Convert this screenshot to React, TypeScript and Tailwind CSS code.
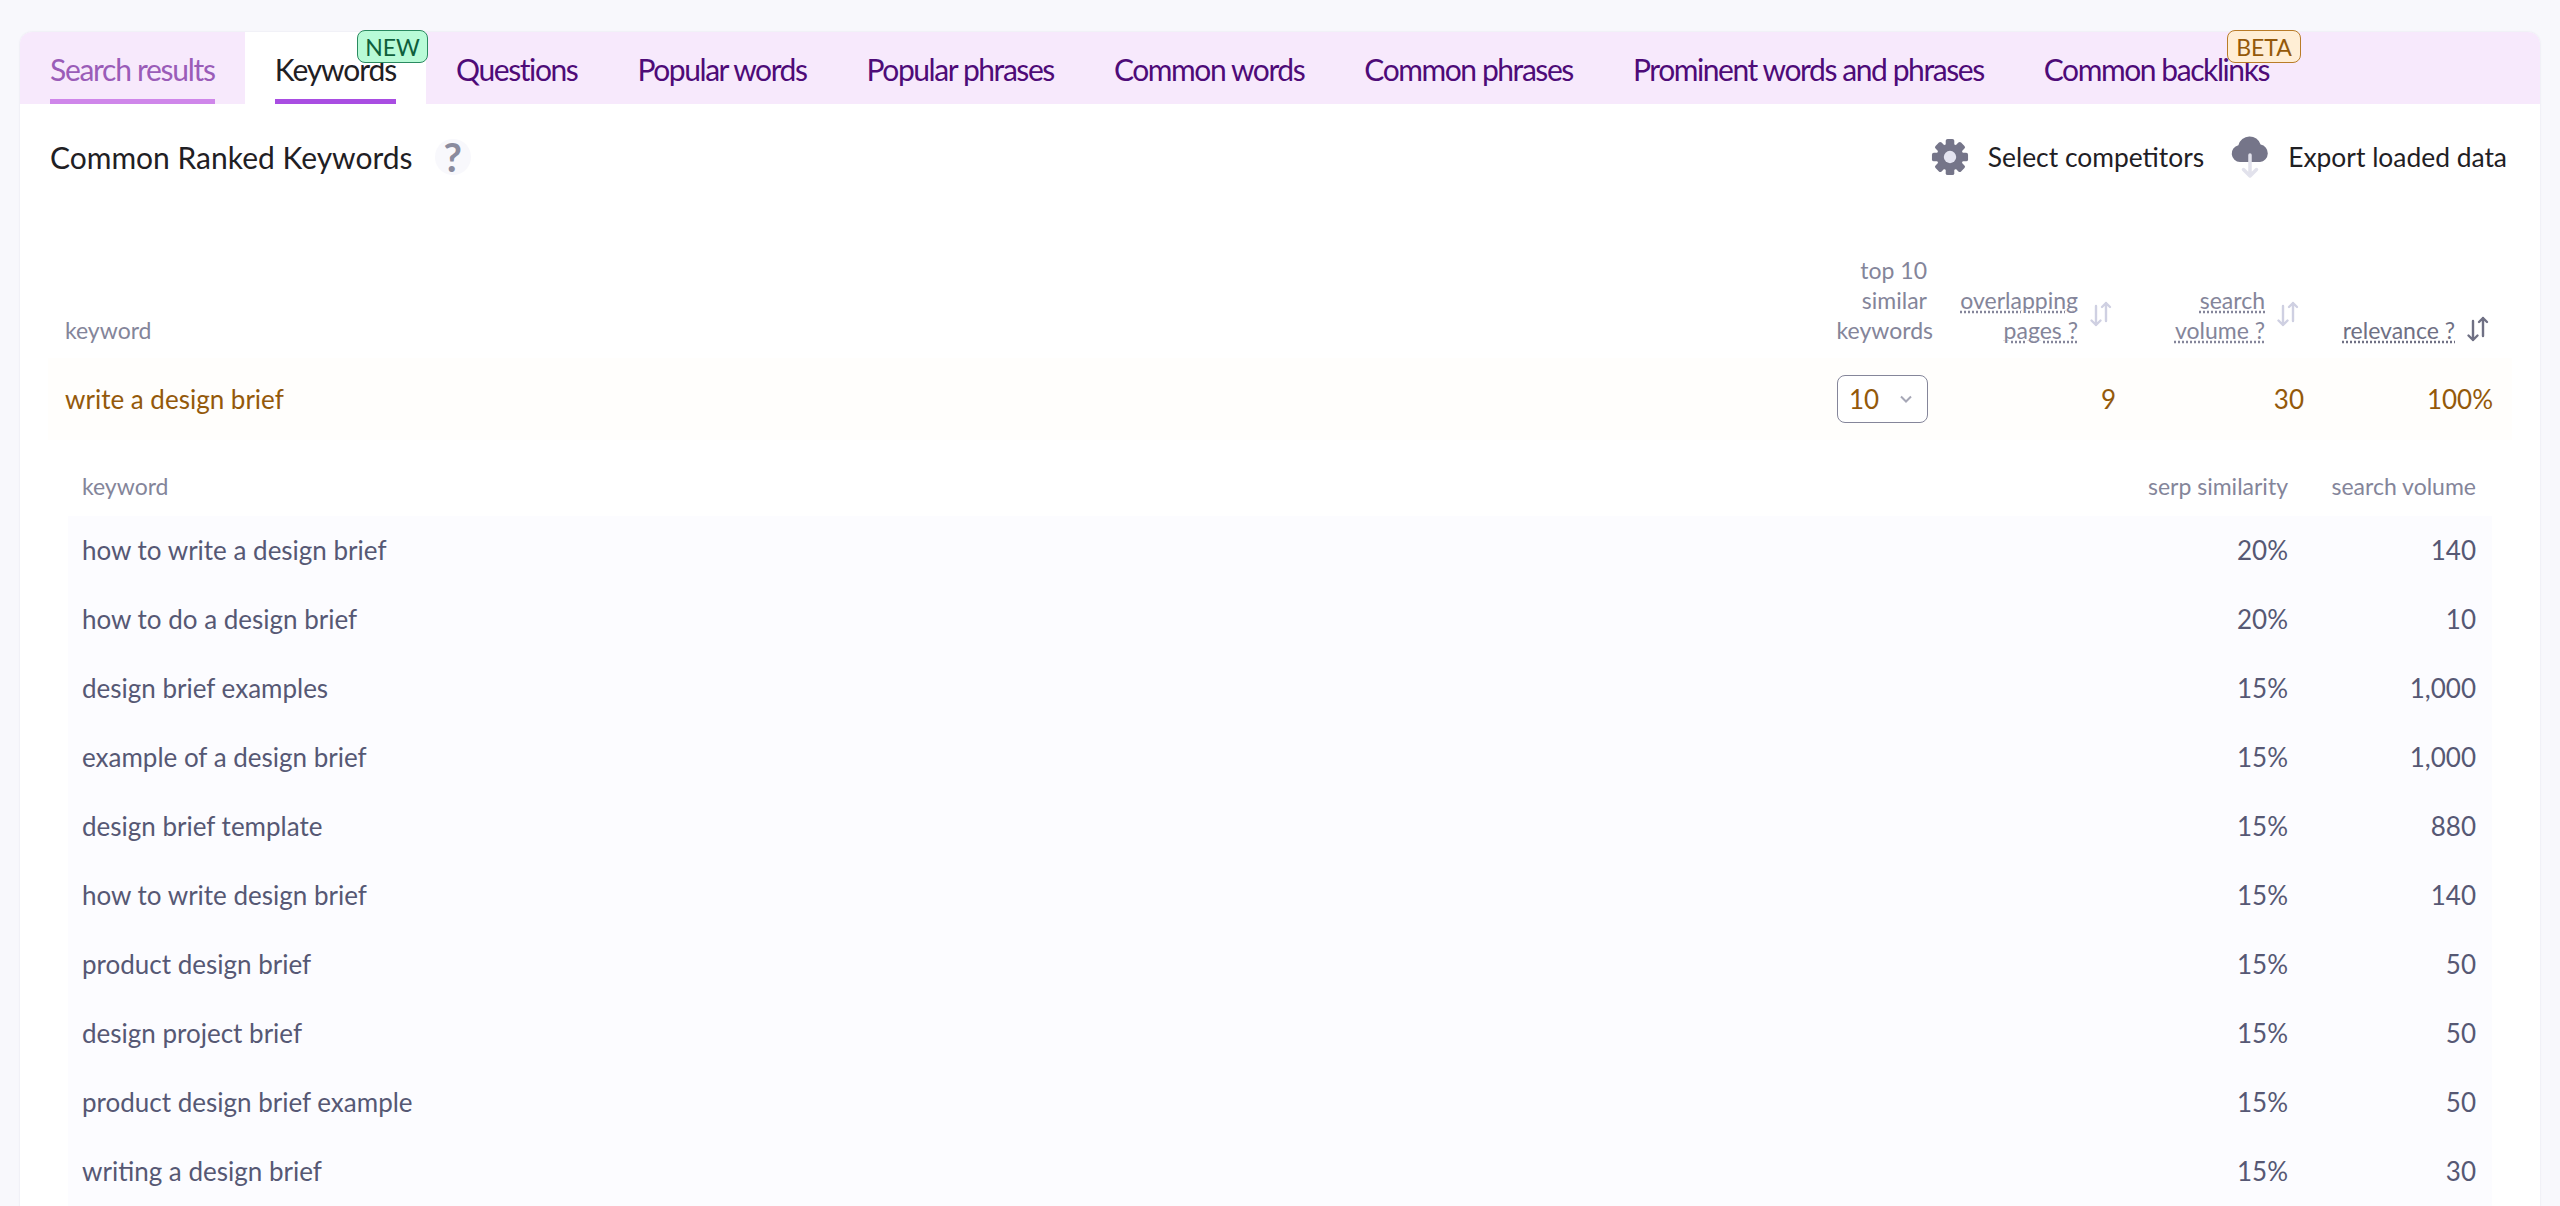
const TABS = [
  { label: "Search results", state: "visited" },
  { label: "Keywords", state: "active", badge: "new" },
  { label: "Questions" },
  { label: "Popular words" },
  { label: "Popular phrases" },
  { label: "Common words" },
  { label: "Common phrases" },
  { label: "Prominent words and phrases" },
  { label: "Common backlinks", badge: "beta" },
];

const ROWS = [
  ["how to write a design brief", "20%", "140"],
  ["how to do a design brief", "20%", "10"],
  ["design brief examples", "15%", "1,000"],
  ["example of a design brief", "15%", "1,000"],
  ["design brief template", "15%", "880"],
  ["how to write design brief", "15%", "140"],
  ["product design brief", "15%", "50"],
  ["design project brief", "15%", "50"],
  ["product design brief example", "15%", "50"],
  ["writing a design brief", "15%", "30"],
];

function GearIcon() {
  const teeth = [0, 45, 90, 135, 180, 225, 270, 315];
  return (
    <svg viewBox="0 0 40 40" className="size-[38px]">
      {teeth.map((deg) => (
        <rect key={deg} x="15.5" y="1" width="9" height="9" rx="2" fill="#757589" transform={`rotate(${deg} 20 20)`} />
      ))}
      <circle cx="20" cy="20" r="14" fill="#757589" />
      <circle cx="20" cy="20" r="6.5" fill="#e4e4f0" />
    </svg>
  );
}

function CloudIcon() {
  return (
    <svg viewBox="0 0 40 44" className="h-[44px] w-[40px]">
      <path
        d="M10 27a8.5 8.5 0 0 1-1.6-16.8A11.5 11.5 0 0 1 30.6 9.6 8.8 8.8 0 0 1 30 27Z"
        fill="#757589"
      />
      <path d="M20 20v21M13.5 34.5 20 41l6.5-6.5" fill="none" stroke="#e2e2ec" strokeWidth="3.5" strokeLinecap="round" strokeLinejoin="round" />
    </svg>
  );
}

function SortIcon({ active }: { active?: boolean }) {
  const color = active ? "#6f7084" : "#cfd0e2";
  return (
    <svg viewBox="0 0 24 26" className="h-[26px] w-[24px]" fill="none" stroke={color} strokeWidth="2.4" strokeLinecap="round" strokeLinejoin="round">
      <path d="M7 5v19M2.5 19.5 7 24l4.5-4.5" />
      <path d="M17 20V2M13 6l4-4 4 4" />
    </svg>
  );
}

function HeaderLabel({ lines, active }: { lines: string[]; active?: boolean }) {
  return (
    <div className="flex items-start justify-end gap-[11px]">
      <div className={`text-right underline decoration-dotted underline-offset-2 ${active ? "text-[#6f7084]" : "text-[#84859a]"}`}>
        {lines.map((line) => (
          <div key={line}>{line}</div>
        ))}
      </div>
      <div className={active ? "mt-[1px]" : "mt-[16px]"}>
        <SortIcon active={active} />
      </div>
    </div>
  );
}

export default function App() {
  return (
    <div className="h-screen overflow-hidden bg-[#f8f8fc] px-5 pt-8 font-['Lato','Liberation_Sans',sans-serif]">
      <div className="h-[1300px] rounded-t-xl bg-white shadow-[0_0_2px_rgba(120,120,160,0.18)]">
        <nav className="flex h-[72px] rounded-t-xl bg-[#f7e9fc]">
          {TABS.map((tab) => (
            <div
              key={tab.label}
              className={`flex h-full flex-col px-[30px] pt-[21px] ${tab.state === "active" ? "bg-white" : ""}`}
            >
              <div
                className={`relative flex h-[51px] flex-col justify-between text-[30px] leading-[32px] ${
                  tab.state === "active"
                    ? "tracking-[-1.1px] text-[#1f2024]"
                    : tab.state === "visited"
                      ? "tracking-[-1.28px] text-[#9a5cb8]"
                      : "tracking-[-1.42px] text-[#4e0b78]"
                }`}
              >
                <span className="whitespace-nowrap">{tab.label}</span>
                <span
                  className={`h-[5px] ${tab.state === "active" ? "bg-[#a94de2]" : tab.state === "visited" ? "bg-[#cf86ea]" : ""}`}
                />
                {tab.badge === "new" && (
                  <span className="absolute -right-[32px] -top-[23px] flex h-[33px] w-[71px] items-center justify-center rounded-lg border border-[#2a8a60] bg-[#b8fbd7] text-[23px] tracking-normal text-[#0e5f3c]">
                    NEW
                  </span>
                )}
                {tab.badge === "beta" && (
                  <span className="absolute -right-[32px] -top-[23px] flex h-[33px] w-[74px] items-center justify-center rounded-lg border border-[#b97c28] bg-[#ffeed5] text-[23px] tracking-normal text-[#94590a]">
                    BETA
                  </span>
                )}
              </div>
            </div>
          ))}
        </nav>

        <div className="flex h-[106px] items-center justify-between pl-[30px] pr-[33px]">
          <div className="flex items-center gap-[22px]">
            <h1 className="text-[30px] font-normal leading-none text-[#1f2024]">Common Ranked Keywords</h1>
            <span className="flex size-[36px] items-center justify-center rounded-full bg-[#f8f8fc] text-[40px] font-bold leading-none text-[#8a8b9e]">?</span>
          </div>
          <div className="flex items-center text-[26.4px] leading-none text-[#1f2024]">
            <GearIcon />
            <span className="ml-[19px]">Select competitors</span>
            <span className="ml-[26px]"><CloudIcon /></span>
            <span className="ml-[18px]">Export loaded data</span>
          </div>
        </div>

        <div className="mx-[28px] mt-[45px]">
          <div className="flex items-end pb-[13px] text-[23px] leading-[30px] text-[#84859a]">
            <div className="flex-1 pl-[17px]">keyword</div>
            <div className="w-[123px] pr-4 text-right">
              <div className="pr-px">top 10</div>
              <div className="pr-px">similar</div>
              <div className="-mr-[5px]">keywords</div>
            </div>
            <div className="w-[188px] pr-[19px]"><HeaderLabel lines={["overlapping", "pages ?"]} /></div>
            <div className="w-[188px] pr-[20px]"><HeaderLabel lines={["search", "volume ?"]} /></div>
            <div className="w-[192px] pr-[22px]"><HeaderLabel lines={["relevance ?"]} active /></div>
          </div>

          <div className="flex h-[82px] items-center bg-[#fffefc] text-[26px] text-[#94590a]">
            <div className="flex-1 pl-[17px]">write a design brief</div>
            <div className="flex w-[123px] justify-end pr-4">
              <div className="flex h-[48px] w-[91px] items-center justify-between rounded-lg border border-[#85869a] bg-white pl-[11px] pr-[15px]">
                <span>10</span>
                <svg viewBox="0 0 12 8" className="h-[8px] w-[12px]" fill="none" stroke="#a6a7b6" strokeWidth="2"><path d="M1 1.5 6 6.5 11 1.5" /></svg>
              </div>
            </div>
            <div className="w-[188px] pr-4 text-right">9</div>
            <div className="w-[188px] pr-4 text-right">30</div>
            <div className="w-[192px] pr-[19px] text-right">100%</div>
          </div>

          <div className="mx-[20px] pt-[18px]">
            <div className="flex h-[58px] items-center pb-[2px] text-[23px] text-[#84859a]">
              <div className="flex-1 pl-[14px]">keyword</div>
              <div className="w-[188px] pr-4 text-right">serp similarity</div>
              <div className="w-[188px] pr-4 text-right">search volume</div>
            </div>
            <div className="bg-[#fcfcff]">
              {ROWS.map(([keyword, similarity, volume]) => (
                <div key={keyword} className="flex h-[69px] items-center text-[26px] text-[#565874]">
                  <div className="flex-1 pl-[14px]">{keyword}</div>
                  <div className="w-[188px] pr-4 text-right">{similarity}</div>
                  <div className="w-[188px] pr-4 text-right">{volume}</div>
                </div>
              ))}
            </div>
          </div>
        </div>
      </div>
    </div>
  );
}
